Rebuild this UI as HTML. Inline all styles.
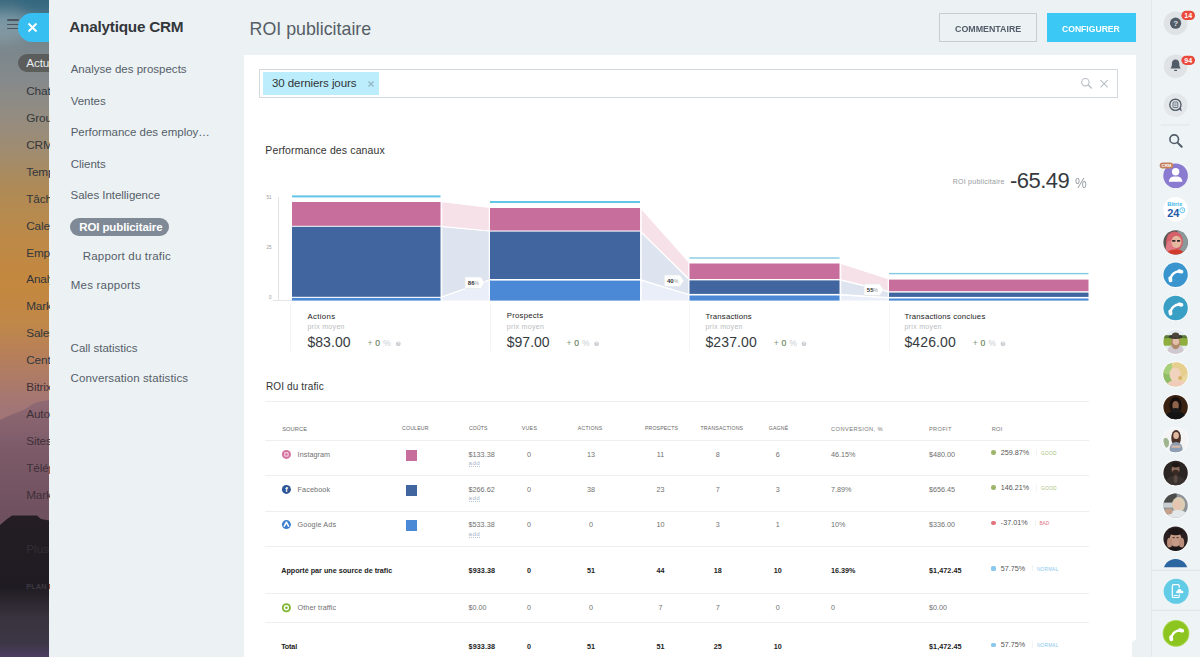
<!DOCTYPE html>
<html lang="fr">
<head>
<meta charset="utf-8">
<title>Analytique CRM - ROI publicitaire</title>
<style>
*{box-sizing:border-box;margin:0;padding:0}
html,body{width:1200px;height:657px;overflow:hidden}
body{font-family:"Liberation Sans",sans-serif;background:#ecf1f3;position:relative;color:#333}
.abs{position:absolute}
.t{position:absolute;white-space:nowrap}
#bg{position:absolute;left:0;top:0;width:52px;height:657px;overflow:hidden;background:#888}
#bgpill{position:absolute;left:18px;top:54px;width:60px;height:18px;border-radius:9px;background:rgba(84,84,82,.82)}
#burger{position:absolute;left:6.5px;top:19.3px;width:12px;height:11px}
#burger i{position:absolute;left:0;width:12px;height:1.6px;background:#4a5560;border-radius:1px}
#close{position:absolute;left:18px;top:13px;width:60px;height:28.5px;border-radius:14.25px;background:#38bff2}
#panel{position:absolute;left:49.3px;top:0;width:1103px;height:657px;background:#ecf1f3}
#mpill{position:absolute;left:70.4px;top:217.8px;width:98.3px;height:18.5px;border-radius:9.25px;background:#808a97}
#card{position:absolute;left:244.3px;top:55.4px;width:891.8px;height:602px;background:#fff}
.btn{position:absolute;top:13px;height:29px}
#filter{position:absolute;left:258.5px;top:68.5px;width:859.5px;height:29px;border:1px solid #d3d8dc;background:#fff}
#tag{position:absolute;left:263px;top:71.5px;width:115.5px;height:23px;background:#bcedfc}
.hl{position:absolute;left:264.5px;width:824px;height:1px;background:#eceff1}
.sq{position:absolute;left:406px;width:11.3px;height:11px}
.dot{position:absolute;left:991.2px;width:4.6px;height:4.6px;border-radius:50%}
#rbar{position:absolute;left:1151.4px;top:0;width:49px;height:657px;background:#eef3f5;border-left:1px solid #e2e8eb}
</style>
</head>
<body>
<div id="bg"><svg class="abs" style="left:0;top:0" width="52" height="657" viewBox="0 0 52 657"><defs><filter id="bl" x="-50%" y="-50%" width="200%" height="200%"><feGaussianBlur stdDeviation="6"/></filter><linearGradient id="sky" x1="0" y1="0" x2="0" y2="1" gradientUnits="objectBoundingBox"><stop offset="0" stop-color="#3d6b80"/><stop offset=".03" stop-color="#5a7f90"/><stop offset=".068" stop-color="#78868c"/><stop offset=".12" stop-color="#858a8c"/><stop offset=".18" stop-color="#948c80"/><stop offset=".23" stop-color="#a08c70"/><stop offset=".28" stop-color="#ad8a58"/><stop offset=".35" stop-color="#bb8a4a"/><stop offset=".43" stop-color="#c4883e"/><stop offset=".49" stop-color="#c08848"/><stop offset=".535" stop-color="#b88058"/><stop offset=".58" stop-color="#ac7a68"/><stop offset=".62" stop-color="#a27676"/><stop offset="1" stop-color="#a27676"/></linearGradient><linearGradient id="mnt" x1="0" y1="0" x2="0" y2="1"><stop offset="0" stop-color="#906a74"/><stop offset=".4" stop-color="#7c5a68"/><stop offset="1" stop-color="#6c4e5c"/></linearGradient><linearGradient id="rock" x1="0" y1="0" x2="0" y2="1"><stop offset="0" stop-color="#241e24"/><stop offset=".5" stop-color="#1f1b22"/><stop offset=".72" stop-color="#38333d"/><stop offset=".9" stop-color="#3d3646"/><stop offset="1" stop-color="#4d3d63"/></linearGradient></defs><rect width="52" height="657" fill="url(#sky)"/><g filter="url(#bl)"><ellipse cx="2" cy="27" rx="30" ry="15" fill="#9fb2bb" opacity=".45"/><ellipse cx="40" cy="3" rx="24" ry="9" fill="#2c6480" opacity=".55"/></g><path d="M0 420C10 414 22 412 30 406S44 402 52 399V530H0z" fill="url(#mnt)"/><path d="M0 525L7 519L12 515.5H37L41 519L52 521V657H0z" fill="url(#rock)"/></svg><div id="burger"><i style="top:0"></i><i style="top:4.3px"></i><i style="top:8.6px"></i></div><div id="bgpill"></div></div>
<div id="close"></div>
<svg class="abs" style="left:27px;top:22px" width="11" height="11" viewBox="0 0 11 11"><path d="M1.5 1.5l8 8M9.5 1.5l-8 8" stroke="#fff" stroke-width="1.9" fill="none"/></svg>
<div id="panel"></div><div id="mpill"></div>
<div class="btn" style="left:938.8px;width:98px;border:1px solid #c6cdd3"></div>
<div class="btn" style="left:1046.5px;width:89.5px;background:#3bc8f5"></div>
<div id="card"></div><div class="abs" style="left:1131.5px;top:640px;width:5px;height:17px;background:#ecf1f3;border-top-left-radius:4px"></div><div id="filter"></div><div id="tag"></div>
<svg class="abs" style="left:366px;top:79px" width="10" height="10" viewBox="0 0 10 10"><path d="M2.5 2.5l5 5M7.5 2.5l-5 5" stroke="#93b6c4" stroke-width="1.3" fill="none"/></svg>
<svg class="abs" style="left:1079px;top:76px" width="32" height="14" viewBox="0 0 32 14"><circle cx="6.4" cy="6.2" r="3.7" stroke="#b9bec4" stroke-width="1.1" fill="none"/><path d="M9.2 9l3.2 3" stroke="#b9bec4" stroke-width="1.4" stroke-linecap="round"/><path d="M21.5 4.2l7.2 7.2M28.7 4.2l-7.2 7.2" stroke="#b9bec4" stroke-width="1.1"/></svg>
<svg class="abs" style="left:0;top:0" width="1200" height="657" viewBox="0 0 1200 657" font-family="Liberation Sans, sans-serif">
<path d="M278.5 197V300.6" stroke="#dfe3e6" stroke-width="1"/>
<path d="M273 300.5H292" stroke="#e3e6e9" stroke-width="1"/>
<text x="271.5" y="199" font-size="4.6" fill="#999" text-anchor="end">51</text>
<text x="271.5" y="248.7" font-size="4.6" fill="#999" text-anchor="end">25</text>
<text x="271.5" y="299.3" font-size="4.6" fill="#999" text-anchor="end">0</text>
<polygon points="440.5,202 490,208 490,231 440.5,226.3" fill="#f7e1e9"/>
<polygon points="440.5,226.8 490,231.6 490,279.8 440.5,297.3" fill="#dde4ef"/>
<polygon points="440.5,297.9 490,280.6 490,300.6 440.5,300.6" fill="#e9eef8"/>
<path d="M440.5 226.3L490 231M440.5 297.3L490 279.8" stroke="#fff" stroke-width="1.2" fill="none"/>
<polygon points="640,208 689.5,263.5 689.5,279.5 640,231" fill="#f7e1e9"/>
<polygon points="640,231.6 689.5,280.4 689.5,294.7 640,279.5" fill="#dde4ef"/>
<polygon points="640,280.6 689.5,295.5 689.5,300.6 640,300.6" fill="#e9eef8"/>
<path d="M640 231L689.5 279.5M640 279.5L689.5 294.7" stroke="#fff" stroke-width="1.2" fill="none"/>
<polygon points="839.5,263.5 889,279.6 889,291.7 839.5,279.5" fill="#f7e1e9"/>
<polygon points="839.5,280.4 889,292.6 889,297.7 839.5,294.4" fill="#dde4ef"/>
<polygon points="839.5,295.5 889,298.5 889,300.6 839.5,300.6" fill="#e9eef8"/>
<path d="M839.5 279.5L889 291.7M839.5 294.4L889 297.7" stroke="#fff" stroke-width="1.2" fill="none"/>
<path d="M441.5 201V300.6M489.5 207V300.6" stroke="#fff" stroke-width="1.6" fill="none" opacity=".85"/>
<path d="M641 207V300.6M689 262.5V300.6" stroke="#fff" stroke-width="1.6" fill="none" opacity=".85"/>
<path d="M840.5 262.5V300.6M888.5 278.6V300.6" stroke="#fff" stroke-width="1.6" fill="none" opacity=".85"/>
<rect x="292" y="195.4" width="148.5" height="2" fill="#62c4e6"/>
<rect x="292" y="202" width="148.5" height="23.8" fill="#c76e9c"/>
<rect x="292" y="226.8" width="148.5" height="70" fill="#41659f"/>
<rect x="292" y="297.9" width="148.5" height="2.7" fill="#4b88d6"/>
<rect x="490" y="201" width="150" height="2" fill="#62c4e6"/>
<rect x="490" y="208" width="150" height="22.5" fill="#c76e9c"/>
<rect x="490" y="231.6" width="150" height="47.4" fill="#41659f"/>
<rect x="490" y="280.6" width="150" height="20" fill="#4b88d6"/>
<rect x="689.5" y="257.3" width="150" height="1.4" fill="#84cbe2"/>
<rect x="689.5" y="263.5" width="150" height="15.5" fill="#c76e9c"/>
<rect x="689.5" y="280.4" width="150" height="13.5" fill="#41659f"/>
<rect x="689.5" y="295.5" width="150" height="5.1" fill="#4b88d6"/>
<rect x="889" y="272.9" width="199.5" height="1.4" fill="#84cbe2"/>
<rect x="889" y="279.6" width="199.5" height="11.6" fill="#c76e9c"/>
<rect x="889" y="292.6" width="199.5" height="4.3" fill="#41659f"/>
<rect x="889" y="298.5" width="199.5" height="2.1" fill="#4b88d6"/>
<path d="M465 276.9h15.8l3.8 5.8l-3.8 5.8h-15.8z" fill="#fff" stroke="#e4e7ea" stroke-width=".8"/>
<text x="467.8" y="284.9" font-size="6" font-weight="bold" fill="#333">86<tspan font-weight="normal" fill="#999" font-size="5">%</tspan></text>
<path d="M664.2 275h15.8l3.8 5.8l-3.8 5.8h-15.8z" fill="#fff" stroke="#e4e7ea" stroke-width=".8"/>
<text x="667" y="283" font-size="6" font-weight="bold" fill="#333">40<tspan font-weight="normal" fill="#999" font-size="5">%</tspan></text>
<path d="M864 283.9h15.8l3.8 5.8l-3.8 5.8h-15.8z" fill="#fff" stroke="#e4e7ea" stroke-width=".8"/>
<text x="866.8" y="291.9" font-size="6" font-weight="bold" fill="#333">55<tspan font-weight="normal" fill="#999" font-size="5">%</tspan></text>
<path d="M290.5 304V351" stroke="#f2f4f5" stroke-width="1"/>
<path d="M490.5 304V351" stroke="#f2f4f5" stroke-width="1"/>
<path d="M689.5 304V351" stroke="#f2f4f5" stroke-width="1"/>
<path d="M889.5 304V351" stroke="#f2f4f5" stroke-width="1"/>
<circle cx="398.3" cy="343.8" r="2.4" fill="#c8ccd0"/><text x="398.3" y="345.2" font-size="3.6" font-weight="bold" fill="#fff" text-anchor="middle">?</text>
<circle cx="596.6" cy="343.8" r="2.4" fill="#c8ccd0"/><text x="596.6" y="345.2" font-size="3.6" font-weight="bold" fill="#fff" text-anchor="middle">?</text>
<circle cx="804" cy="343.8" r="2.4" fill="#c8ccd0"/><text x="804" y="345.2" font-size="3.6" font-weight="bold" fill="#fff" text-anchor="middle">?</text>
<circle cx="1003" cy="343.8" r="2.4" fill="#c8ccd0"/><text x="1003" y="345.2" font-size="3.6" font-weight="bold" fill="#fff" text-anchor="middle">?</text>
</svg>
<div class="hl" style="top:401px"></div>
<div class="hl" style="top:440px"></div>
<div class="hl" style="top:475px"></div>
<div class="hl" style="top:511px"></div>
<div class="hl" style="top:546px"></div>
<div class="hl" style="top:593px"></div>
<div class="hl" style="top:622px"></div>
<div class="sq" style="top:449.8px;background:#c76e9c"></div>
<div class="sq" style="top:484.8px;background:#41659f"></div>
<div class="sq" style="top:520.1px;background:#4b88d6"></div>
<svg class="abs" style="left:0;top:0" width="1200" height="657" viewBox="0 0 1200 657" font-family="Liberation Sans, sans-serif">
<circle cx="286.4" cy="454.4" r="4.5" fill="#d2709d"/><rect x="284.1" y="452.1" width="4.6" height="4.6" rx="1.3" fill="#f3c9dc"/><circle cx="286.4" cy="454.4" r="1.2" fill="#d2709d"/>
<circle cx="286.4" cy="489.4" r="4.5" fill="#2f5597"/><text x="286.6" y="492.3" font-size="7.5" font-weight="bold" fill="#fff" text-anchor="middle">f</text>
<circle cx="286.4" cy="524.6" r="4.5" fill="#3d7fcc"/><path d="M284 526.7l2.4-4.6l2.4 4.6" stroke="#fff" stroke-width="1.5" fill="none" stroke-linejoin="round"/>
<circle cx="286.4" cy="607.7" r="4.5" fill="#7cb52f"/><circle cx="286.4" cy="607.7" r="2" fill="none" stroke="#fff" stroke-width="1.4"/>
</svg>
<div class="dot" style="top:450.3px;background:#9cb56a;"></div>
<div class="abs" style="left:1036px;top:449.6px;width:1px;height:6px;background:#f0f2f4"></div>
<div class="dot" style="top:485.3px;background:#9cb56a;"></div>
<div class="abs" style="left:1036px;top:484.6px;width:1px;height:6px;background:#f0f2f4"></div>
<div class="dot" style="top:520.6px;background:#e2737a;"></div>
<div class="abs" style="left:1034.7px;top:519.9px;width:1px;height:6px;background:#f0f2f4"></div>
<div class="dot" style="top:566px;background:#8cc9ee;border-radius:1.5px;"></div>
<div class="abs" style="left:1031.6px;top:565.3px;width:1px;height:6px;background:#f0f2f4"></div>
<div class="dot" style="top:642.5px;background:#8cc9ee;border-radius:1.5px;"></div>
<div class="abs" style="left:1031.6px;top:641.8px;width:1px;height:6px;background:#f0f2f4"></div>
<div id="rbar"></div>
<svg class="abs" style="left:1152px;top:0" width="48" height="657" viewBox="1152 0 48 657" font-family="Liberation Sans, sans-serif">
<defs><clipPath id="cut"><rect x="1152" y="540" width="48" height="27.2"/></clipPath></defs>
<circle cx="1175.6" cy="23.2" r="11.8" fill="#dfe3e6"/><circle cx="1175.6" cy="23.2" r="5.6" fill="#525c69"/>
<text x="1175.6" y="26.1" font-size="8" font-weight="bold" fill="#dfe3e6" text-anchor="middle">?</text>
<circle cx="1175.6" cy="66.2" r="11.8" fill="#dfe3e6"/>
<path d="M1175.6 59.6c-2.5 0-3.7 1.8-3.7 4.2c0 2.3-.5 3.6-1.5 4.7h10.4c-1-1.1-1.5-2.4-1.5-4.7c0-2.4-1.2-4.2-3.7-4.2z" fill="#525c69"/><rect x="1174.1" y="69.7" width="3" height="1.4" rx=".7" fill="#525c69"/>
<circle cx="1175.6" cy="105.2" r="11.8" fill="#e3e7ea"/><circle cx="1175.4" cy="104.8" r="5.6" fill="none" stroke="#525c69" stroke-width="1.4"/><path d="M1178.6 109l3.2 2.4l-1-3.8z" fill="#525c69"/>
<rect x="1173" y="102" width="4.8" height="5.6" rx=".8" fill="none" stroke="#525c69" stroke-width=".9"/><path d="M1174.2 104h2.4M1174.2 105.7h2.4" stroke="#525c69" stroke-width=".7"/>
<path d="M1161 125H1190" stroke="#e1e5e8" stroke-width="1"/>
<circle cx="1174.2" cy="139.2" r="4.3" fill="none" stroke="#525c69" stroke-width="1.6"/><path d="M1177.5 142.6l4.2 4.2" stroke="#525c69" stroke-width="2" stroke-linecap="round"/>
<circle cx="1175.6" cy="175.7" r="12.3" fill="#8b7bd0"/><circle cx="1175.6" cy="171.8" r="3.7" fill="#fff"/><path d="M1168.8 181.8c.2-3.3 2-4.8 4.8-5.3h4c2.8.5 4.6 2 4.8 5.3z" fill="#fff"/>
<rect x="1159.7" y="162.5" width="13.6" height="6" rx="3" fill="#c4815c"/><text x="1166.5" y="167.2" font-size="4.3" font-weight="bold" fill="#fff" text-anchor="middle">CRM</text>
<circle cx="1175.6" cy="209.4" r="12.3" fill="#fff"/><text x="1174.7" y="206.2" font-size="5.9" font-weight="bold" fill="#3bb6e8" text-anchor="middle">Bitrix</text><text x="1173.3" y="216.8" font-size="11" font-weight="bold" fill="#1f5aa8" text-anchor="middle">24</text><circle cx="1182.3" cy="210.2" r="2.5" fill="none" stroke="#3bb6e8" stroke-width=".8"/><path d="M1182.3 208.8v1.5h1.1" stroke="#3bb6e8" stroke-width=".6" fill="none"/>
<clipPath id="c242"><circle cx="1175.6" cy="242.4" r="12.2"/></clipPath><g clip-path="url(#c242)"><rect x="1162.6" y="229.4" width="26" height="26" fill="#5a5653"/><rect x="1177.6" y="229.4" width="12" height="26" fill="#8a9a9a"/><ellipse cx="1174.6" cy="241.4" rx="8.5" ry="10" fill="#d4606a"/><ellipse cx="1170.6" cy="248.4" rx="5" ry="8" fill="#e07a84"/><ellipse cx="1176.4" cy="241.9" rx="5" ry="6.2" fill="#e6b8a0"/><ellipse cx="1175.6" cy="254.4" rx="9" ry="5" fill="#d23c2c"/><path d="M1172.2 240.8h3.2M1177 240.8h3.2" stroke="#3a2a2a" stroke-width="1.7"/></g>
<circle cx="1175.6" cy="274.8" r="13.3" fill="#f7f9fa"/><circle cx="1175.6" cy="274.8" r="12.2" fill="#3a95cf"/>
<path d="M1181.2 271.5C1175.1 270.4 1170.6 274.8 1170.4 280.3" fill="none" stroke="#fff" stroke-width="2.3" stroke-linecap="round"/><path d="M1179.2 271.1L1181.5 271.7M1170.2 278L1170.6 280.4" fill="none" stroke="#fff" stroke-width="3.7" stroke-linecap="round"/>
<circle cx="1175.6" cy="308" r="13.3" fill="#f7f9fa"/><circle cx="1175.6" cy="308" r="12.2" fill="#3a9fc4"/>
<path d="M1181.2 304.7C1175.1 303.6 1170.6 308 1170.4 313.5" fill="none" stroke="#fff" stroke-width="2.3" stroke-linecap="round"/><path d="M1179.2 304.3L1181.5 304.9M1170.2 311.2L1170.6 313.6" fill="none" stroke="#fff" stroke-width="3.7" stroke-linecap="round"/>
<clipPath id="c341"><circle cx="1175.6" cy="341.7" r="12.2"/></clipPath><circle cx="1175.6" cy="341.7" r="13.3" fill="#f7f9fa"/><g clip-path="url(#c341)"><rect x="1162.6" y="328.7" width="26" height="26" fill="#e6edf1"/><rect x="1162.6" y="336.7" width="26" height="9" fill="#8fae3e"/><rect x="1162.6" y="335.2" width="26" height="3" fill="#5b7a3a"/><ellipse cx="1175.6" cy="351.7" rx="8" ry="8" fill="#cfc9cf"/><ellipse cx="1175.6" cy="342.7" rx="4.6" ry="6.5" fill="#b08a6a"/><ellipse cx="1175.9" cy="341.2" rx="3.2" ry="3.8" fill="#e2bfa8"/><ellipse cx="1175.6" cy="336.7" rx="7" ry="2.2" fill="#3b3a32"/><ellipse cx="1175.6" cy="335.2" rx="3.6" ry="2.6" fill="#4a463a"/></g>
<clipPath id="c374"><circle cx="1175.6" cy="374.4" r="12.2"/></clipPath><circle cx="1175.6" cy="374.4" r="13.3" fill="#f7f9fa"/><g clip-path="url(#c374)"><rect x="1162.6" y="361.4" width="26" height="26" fill="#e9d7a0"/><rect x="1162.6" y="361.4" width="9" height="26" fill="#8fbc66"/><ellipse cx="1167.6" cy="368.4" rx="5" ry="6" fill="#a8cf7a"/><ellipse cx="1179.6" cy="369.4" rx="8" ry="8" fill="#e6cf8e"/><ellipse cx="1175.1" cy="374.4" rx="5.6" ry="7" fill="#f1d3bd"/><ellipse cx="1176.6" cy="385.4" rx="10" ry="5" fill="#f0cbb9"/><ellipse cx="1180.1" cy="377.9" rx="2" ry="2" fill="#d9b06a"/></g>
<clipPath id="c407"><circle cx="1175.6" cy="407.1" r="12.2"/></clipPath><circle cx="1175.6" cy="407.1" r="13.3" fill="#f7f9fa"/><g clip-path="url(#c407)"><rect x="1162.6" y="394.1" width="26" height="26" fill="#3a2212"/><ellipse cx="1175.6" cy="405.1" rx="6.2" ry="8" fill="#17100e"/><ellipse cx="1175.6" cy="405.6" rx="3.2" ry="4.6" fill="#8d634b"/><ellipse cx="1175.6" cy="418.1" rx="10.5" ry="7" fill="#141414"/><ellipse cx="1175.6" cy="410.6" rx="4" ry="2.5" fill="#1a1a1c"/></g>
<clipPath id="c440"><circle cx="1175.6" cy="440" r="12.2"/></clipPath><circle cx="1175.6" cy="440" r="13.3" fill="#f7f9fa"/><g clip-path="url(#c440)"><rect x="1162.6" y="427" width="26" height="26" fill="#f3f4f3"/><ellipse cx="1165.6" cy="443" rx="3.5" ry="5" fill="#9fb58f"/><ellipse cx="1176.1" cy="438" rx="4.8" ry="8" fill="#4a3228"/><ellipse cx="1176.1" cy="435.5" rx="2.8" ry="3.5" fill="#dfb8a2"/><ellipse cx="1176.1" cy="449" rx="6.5" ry="7" fill="#8d9db3"/><rect x="1171.6" y="445.5" width="9" height="2.2" fill="#d9b8a6"/></g>
<clipPath id="c473"><circle cx="1175.6" cy="473" r="12.2"/></clipPath><circle cx="1175.6" cy="473" r="13.3" fill="#f7f9fa"/><g clip-path="url(#c473)"><rect x="1162.6" y="460" width="26" height="26" fill="#2b2523"/><ellipse cx="1175.6" cy="469.5" rx="4" ry="5" fill="#8a6a58"/><ellipse cx="1175.6" cy="472.7" rx="3.4" ry="3" fill="#3a2a24"/><ellipse cx="1175.6" cy="465" rx="4" ry="2.4" fill="#1d1716"/><ellipse cx="1175.6" cy="483" rx="10" ry="7.5" fill="#39322f"/><ellipse cx="1175.6" cy="479" rx="2" ry="4" fill="#5a4a44"/></g>
<clipPath id="c505"><circle cx="1175.6" cy="505.6" r="12.2"/></clipPath><circle cx="1175.6" cy="505.6" r="13.3" fill="#f7f9fa"/><g clip-path="url(#c505)"><rect x="1162.6" y="492.6" width="26" height="26" fill="#8e9498"/><rect x="1162.6" y="492.6" width="14" height="11" fill="#4b4c4a"/><rect x="1162.6" y="502.6" width="10" height="5" fill="#c9ced2"/><ellipse cx="1178.6" cy="504.6" rx="6.5" ry="7.5" fill="#dccdb4"/><ellipse cx="1177.1" cy="505.1" rx="3.6" ry="4.6" fill="#e6c4b0"/><ellipse cx="1177.6" cy="516.6" rx="11" ry="6.5" fill="#e3e7ea"/><ellipse cx="1168.6" cy="511.6" rx="4" ry="3" fill="#c2a08a"/></g>
<clipPath id="c538"><circle cx="1175.6" cy="538.7" r="12.2"/></clipPath><circle cx="1175.6" cy="538.7" r="13.3" fill="#f7f9fa"/><g clip-path="url(#c538)"><rect x="1162.6" y="525.7" width="26" height="26" fill="#2a2021"/><ellipse cx="1175.6" cy="539.2" rx="6" ry="7.5" fill="#c49a86"/><ellipse cx="1175.6" cy="531.7" rx="7" ry="3.5" fill="#1e1617"/><ellipse cx="1169.6" cy="542.7" rx="2.6" ry="5" fill="#b98d79"/><ellipse cx="1181.6" cy="542.7" rx="2.6" ry="5" fill="#b98d79"/><ellipse cx="1175.6" cy="550.7" rx="10" ry="4" fill="#1a1516"/><path d="M1172.6 537.7h2M1176.6 537.7h2" stroke="#3a2522" stroke-width="1"/></g>
<circle cx="1175.6" cy="571.3" r="12.3" fill="#2c66a0" clip-path="url(#cut)"/>
<path d="M1152 570.3H1200M1152 610.3H1200" stroke="#e1e6e9" stroke-width="1.2"/>
<circle cx="1176.2" cy="591.3" r="12.5" fill="#62cbe6"/>
<rect x="1172.3" y="584.7" width="7" height="12.8" rx="1.3" fill="none" stroke="#fff" stroke-width="1.2"/><path d="M1173.8 595.5h4" stroke="#fff" stroke-width="1"/>
<path d="M1177.2 593.8c-2.1 0-2.4-2.8-.4-3.1c.3-2.9 4.4-3.1 5.1-.6c2.6-.2 2.9 3.6.4 3.7z" fill="#fff" stroke="#62cbe6" stroke-width="1.1"/>
<circle cx="1176" cy="633.4" r="13.3" fill="#a3d546"/><circle cx="1176" cy="633.4" r="12.3" fill="#8cc51f"/>
<g transform="translate(0.8 1)"><path d="M1181.2 629.5C1175.1 628.4 1170.6 632.8 1170.4 638.3" fill="none" stroke="#fff" stroke-width="2.3" stroke-linecap="round"/><path d="M1179.2 629.1L1181.5 629.7M1170.2 636L1170.6 638.4" fill="none" stroke="#fff" stroke-width="3.7" stroke-linecap="round"/></g>
<rect x="1181.4" y="10.8" width="13.6" height="9.2" rx="4.6" fill="#e9483a"/><text x="1188.2" y="17.9" font-size="7" font-weight="bold" fill="#fff" text-anchor="middle">14</text>
<rect x="1181.4" y="55.7" width="13.6" height="9.2" rx="4.6" fill="#e9483a"/><text x="1188.2" y="62.8" font-size="7" font-weight="bold" fill="#fff" text-anchor="middle">94</text>
</svg>
<div class="t" style="left:26.2px;top:54.5px;font-size:11.8px;line-height:16px;color:#e9ecee;max-width:23.6px;overflow:hidden;letter-spacing:-.15px;">Actualités</div>
<div class="t" style="left:26.2px;top:82.93px;font-size:11.8px;line-height:16px;color:#33363b;max-width:23.6px;overflow:hidden;letter-spacing:-.15px;">Chat et appels</div>
<div class="t" style="left:26.2px;top:109.86px;font-size:11.8px;line-height:16px;color:#33363b;max-width:23.6px;overflow:hidden;letter-spacing:-.15px;">Groupes</div>
<div class="t" style="left:26.2px;top:136.79px;font-size:11.8px;line-height:16px;color:#33363b;max-width:23.6px;overflow:hidden;letter-spacing:-.15px;">CRM</div>
<div class="t" style="left:26.2px;top:163.72px;font-size:11.8px;line-height:16px;color:#33363b;max-width:23.6px;overflow:hidden;letter-spacing:-.15px;">Temps et rapports</div>
<div class="t" style="left:26.2px;top:190.65px;font-size:11.8px;line-height:16px;color:#33363b;max-width:23.6px;overflow:hidden;letter-spacing:-.15px;">Tâches et projets</div>
<div class="t" style="left:26.2px;top:217.58px;font-size:11.8px;line-height:16px;color:#33363b;max-width:23.6px;overflow:hidden;letter-spacing:-.15px;">Calendrier</div>
<div class="t" style="left:26.2px;top:244.51px;font-size:11.8px;line-height:16px;color:#33363b;max-width:23.6px;overflow:hidden;letter-spacing:-.15px;">Employés</div>
<div class="t" style="left:26.2px;top:271.44px;font-size:11.8px;line-height:16px;color:#33363b;max-width:23.6px;overflow:hidden;letter-spacing:-.15px;">Analytique CRM</div>
<div class="t" style="left:26.2px;top:298.37px;font-size:11.8px;line-height:16px;color:#33363b;max-width:23.6px;overflow:hidden;letter-spacing:-.15px;">Marketing</div>
<div class="t" style="left:26.2px;top:325.3px;font-size:11.8px;line-height:16px;color:#33363b;max-width:23.6px;overflow:hidden;letter-spacing:-.15px;">Sales Center</div>
<div class="t" style="left:26.2px;top:352.23px;font-size:11.8px;line-height:16px;color:#33363b;max-width:23.6px;overflow:hidden;letter-spacing:-.15px;">Centre de contact</div>
<div class="t" style="left:26.2px;top:379.16px;font-size:11.8px;line-height:16px;color:#3e3038;max-width:23.6px;overflow:hidden;letter-spacing:-.15px;">Bitrix24.Drive</div>
<div class="t" style="left:26.2px;top:406.09px;font-size:11.8px;line-height:16px;color:#3e3038;max-width:23.6px;overflow:hidden;letter-spacing:-.15px;">Automatisation</div>
<div class="t" style="left:26.2px;top:433.02px;font-size:11.8px;line-height:16px;color:#3e3038;max-width:23.6px;overflow:hidden;letter-spacing:-.15px;">Sites</div>
<div class="t" style="left:26.2px;top:459.95px;font-size:11.8px;line-height:16px;color:#3e3038;max-width:23.6px;overflow:hidden;letter-spacing:-.15px;">Téléphonie</div>
<div class="t" style="left:26.2px;top:486.88px;font-size:11.8px;line-height:16px;color:#3e3038;max-width:23.6px;overflow:hidden;letter-spacing:-.15px;">Market</div>
<div class="t" style="left:26.2px;top:541.1px;font-size:11.8px;line-height:16px;color:#322d34;max-width:23.6px;overflow:hidden;">Plus...</div>
<div class="t" style="left:26.2px;top:582.02px;font-size:7.5px;line-height:10px;color:#3d3841;font-weight:bold;max-width:23.6px;overflow:hidden;">PLAN DU SITE</div>
<div class="t" style="left:69.3px;top:17.04px;font-size:15.3px;line-height:20px;color:#33373b;font-weight:bold;letter-spacing:-0.23px;">Analytique CRM</div>
<div class="t" style="left:249.6px;top:17.12px;font-size:17.8px;line-height:24px;color:#555d66;">ROI publicitaire</div>
<div class="t" style="left:70.7px;top:62.2px;font-size:11.5px;line-height:15px;color:#555e6a;letter-spacing:0.01px;">Analyse des prospects</div>
<div class="t" style="left:70.7px;top:94px;font-size:11.5px;line-height:15px;color:#555e6a;letter-spacing:-0.03px;">Ventes</div>
<div class="t" style="left:70.7px;top:125px;font-size:11.5px;line-height:15px;color:#555e6a;letter-spacing:-0.01px;">Performance des employ…</div>
<div class="t" style="left:70.7px;top:156.5px;font-size:11.5px;line-height:15px;color:#555e6a;letter-spacing:-0.02px;">Clients</div>
<div class="t" style="left:70.6px;top:188.3px;font-size:11.5px;line-height:15px;color:#555e6a;letter-spacing:-0.04px;">Sales Intelligence</div>
<div class="t" style="left:82.8px;top:249.1px;font-size:11.5px;line-height:15px;color:#555e6a;letter-spacing:0.18px;">Rapport du trafic</div>
<div class="t" style="left:70.8px;top:278.3px;font-size:11.5px;line-height:15px;color:#555e6a;letter-spacing:0.21px;">Mes rapports</div>
<div class="t" style="left:70.6px;top:341.3px;font-size:11.5px;line-height:15px;color:#555e6a;letter-spacing:-0.01px;">Call statistics</div>
<div class="t" style="left:70.6px;top:370.5px;font-size:11.5px;line-height:15px;color:#555e6a;letter-spacing:0.11px;">Conversation statistics</div>
<div class="t" style="left:79.2px;top:220.2px;font-size:11.5px;line-height:15px;color:#fff;font-weight:bold;letter-spacing:-0.11px;">ROI publicitaire</div>
<div class="t" style="left:955.1px;top:21.93px;font-size:9.9px;line-height:13px;color:#535c69;font-weight:bold;transform:scaleX(0.896);transform-origin:0 0;">COMMENTAIRE</div>
<div class="t" style="left:1062.4px;top:21.93px;font-size:9.9px;line-height:13px;color:#fff;font-weight:bold;transform:scaleX(0.871);transform-origin:0 0;">CONFIGURER</div>
<div class="t" style="left:272px;top:75.5px;font-size:11.5px;line-height:15px;color:#2f3337;letter-spacing:-0.07px;">30 derniers jours</div>
<div class="t" style="left:265.3px;top:143.13px;font-size:10.5px;line-height:14px;color:#333;letter-spacing:0.13px;">Performance des canaux</div>
<div class="t" style="left:952.7px;top:176.69px;font-size:7px;line-height:10px;color:#969ba0;letter-spacing:0.26px;">ROI publicitaire</div>
<div class="t" style="left:1010px;top:165.93px;font-size:22px;line-height:29px;color:#363a3f;letter-spacing:-0.52px;">-65.49</div>
<div class="t" style="left:1075px;top:172.64px;font-size:15.3px;line-height:20px;color:#9a9fa5;transform:scaleX(0.86);transform-origin:0 0;">%</div>
<div class="t" style="left:307.4px;top:311.22px;font-size:7.8px;line-height:11px;color:#222;letter-spacing:0.35px;">Actions</div>
<div class="t" style="left:307.4px;top:321.99px;font-size:7px;line-height:10px;color:#b8bcc0;letter-spacing:0.32px;">prix moyen</div>
<div class="t" style="left:307.4px;top:332.67px;font-size:14px;line-height:19px;color:#363b40;letter-spacing:0.06px;">$83.00</div>
<div class="t" style="left:367.4px;top:337.46px;font-size:8.6px;line-height:12px;color:#82987a;letter-spacing:0.25px;">+ <span style="text-shadow:0 0 .3px #82987a">0</span> <span style="color:#c9cdd1">%</span></div>
<div class="t" style="left:506.8px;top:310.32px;font-size:7.8px;line-height:11px;color:#222;letter-spacing:0.2px;">Prospects</div>
<div class="t" style="left:506.8px;top:321.99px;font-size:7px;line-height:10px;color:#b8bcc0;letter-spacing:0.32px;">prix moyen</div>
<div class="t" style="left:506.8px;top:332.67px;font-size:14px;line-height:19px;color:#363b40;letter-spacing:0px;">$97.00</div>
<div class="t" style="left:566.4px;top:337.46px;font-size:8.6px;line-height:12px;color:#82987a;letter-spacing:0.25px;">+ <span style="text-shadow:0 0 .3px #82987a">0</span> <span style="color:#c9cdd1">%</span></div>
<div class="t" style="left:705.4px;top:311.22px;font-size:7.8px;line-height:11px;color:#222;letter-spacing:0.18px;">Transactions</div>
<div class="t" style="left:705.4px;top:321.99px;font-size:7px;line-height:10px;color:#b8bcc0;letter-spacing:0.32px;">prix moyen</div>
<div class="t" style="left:705.4px;top:332.67px;font-size:14px;line-height:19px;color:#363b40;letter-spacing:0.13px;">$237.00</div>
<div class="t" style="left:773.7px;top:337.46px;font-size:8.6px;line-height:12px;color:#82987a;letter-spacing:0.25px;">+ <span style="text-shadow:0 0 .3px #82987a">0</span> <span style="color:#c9cdd1">%</span></div>
<div class="t" style="left:904.4px;top:311.22px;font-size:7.8px;line-height:11px;color:#222;letter-spacing:0.18px;">Transactions conclues</div>
<div class="t" style="left:904.4px;top:321.99px;font-size:7px;line-height:10px;color:#b8bcc0;letter-spacing:0.32px;">prix moyen</div>
<div class="t" style="left:904.4px;top:332.67px;font-size:14px;line-height:19px;color:#363b40;letter-spacing:0.13px;">$426.00</div>
<div class="t" style="left:972.7px;top:337.46px;font-size:8.6px;line-height:12px;color:#82987a;letter-spacing:0.25px;">+ <span style="text-shadow:0 0 .3px #82987a">0</span> <span style="color:#c9cdd1">%</span></div>
<div class="t" style="left:266px;top:379.8px;font-size:10px;line-height:13px;color:#333;letter-spacing:0.13px;">ROI du trafic</div>
<div class="t" style="left:282.2px;top:424.72px;font-size:5.7px;line-height:8px;color:#6a6a6a;letter-spacing:0.08px;">SOURCE</div>
<div class="t" style="left:402px;top:425.38px;font-size:5.2px;line-height:7px;color:#666;letter-spacing:0.18px;">COULEUR</div>
<div class="t" style="left:469px;top:425.38px;font-size:5.2px;line-height:7px;color:#666;letter-spacing:0.07px;">COÛTS</div>
<div class="t" style="left:521.8px;top:425.38px;font-size:5.2px;line-height:7px;color:#666;letter-spacing:0.31px;">VUES</div>
<div class="t" style="left:577.8px;top:425.38px;font-size:5.2px;line-height:7px;color:#666;letter-spacing:0.21px;">ACTIONS</div>
<div class="t" style="left:645px;top:425.38px;font-size:5.2px;line-height:7px;color:#666;letter-spacing:0.11px;">PROSPECTS</div>
<div class="t" style="left:700.5px;top:425.38px;font-size:5.2px;line-height:7px;color:#666;letter-spacing:0.17px;">TRANSACTIONS</div>
<div class="t" style="left:768.8px;top:425.38px;font-size:5.2px;line-height:7px;color:#666;letter-spacing:0.15px;">GAGNÉ</div>
<div class="t" style="left:831px;top:424.72px;font-size:5.7px;line-height:8px;color:#777;letter-spacing:0.43px;">CONVERSION, %</div>
<div class="t" style="left:929px;top:424.72px;font-size:5.7px;line-height:8px;color:#777;letter-spacing:0.32px;">PROFIT</div>
<div class="t" style="left:991.7px;top:424.72px;font-size:5.7px;line-height:8px;color:#777;letter-spacing:0.29px;">ROI</div>
<div class="t" style="left:297.6px;top:449.52px;font-size:7.2px;line-height:10px;color:#707070;letter-spacing:0.07px;">Instagram</div>
<div class="t" style="left:468.6px;top:449.52px;font-size:7.2px;line-height:10px;color:#707070;letter-spacing:0.01px;">$133.38</div>
<div class="t" style="left:468.6px;top:459.35px;font-size:6.2px;line-height:9px;color:#a9b6c9;letter-spacing:0.42px;border-bottom:1px dotted #b9c3d2;line-height:7px;">add</div>
<div class="t" style="left:529px;top:449.52px;font-size:7.2px;line-height:10px;color:#707070;transform:translateX(-50%);">0</div>
<div class="t" style="left:591px;top:449.52px;font-size:7.2px;line-height:10px;color:#707070;transform:translateX(-50%);">13</div>
<div class="t" style="left:660.6px;top:449.52px;font-size:7.2px;line-height:10px;color:#707070;transform:translateX(-50%);">11</div>
<div class="t" style="left:717.8px;top:449.52px;font-size:7.2px;line-height:10px;color:#707070;transform:translateX(-50%);">8</div>
<div class="t" style="left:777.7px;top:449.52px;font-size:7.2px;line-height:10px;color:#707070;transform:translateX(-50%);">6</div>
<div class="t" style="left:831px;top:449.52px;font-size:7.2px;line-height:10px;color:#707070;letter-spacing:0px;">46.15%</div>
<div class="t" style="left:929px;top:449.52px;font-size:7.2px;line-height:10px;color:#707070;letter-spacing:0.01px;">$480.00</div>
<div class="t" style="left:1000.8px;top:447.92px;font-size:7.2px;line-height:10px;color:#555;letter-spacing:0.01px;">259.87%</div>
<div class="t" style="left:1041px;top:449.91px;font-size:4.8px;line-height:7px;color:#a9bf7c;letter-spacing:0.28px;">GOOD</div>
<div class="t" style="left:297.6px;top:484.52px;font-size:7.2px;line-height:10px;color:#707070;letter-spacing:0.13px;">Facebook</div>
<div class="t" style="left:468.6px;top:484.52px;font-size:7.2px;line-height:10px;color:#707070;letter-spacing:0.01px;">$266.62</div>
<div class="t" style="left:468.6px;top:494.35px;font-size:6.2px;line-height:9px;color:#a9b6c9;letter-spacing:0.42px;border-bottom:1px dotted #b9c3d2;line-height:7px;">add</div>
<div class="t" style="left:529px;top:484.52px;font-size:7.2px;line-height:10px;color:#707070;transform:translateX(-50%);">0</div>
<div class="t" style="left:591px;top:484.52px;font-size:7.2px;line-height:10px;color:#707070;transform:translateX(-50%);">38</div>
<div class="t" style="left:660.6px;top:484.52px;font-size:7.2px;line-height:10px;color:#707070;transform:translateX(-50%);">23</div>
<div class="t" style="left:717.8px;top:484.52px;font-size:7.2px;line-height:10px;color:#707070;transform:translateX(-50%);">7</div>
<div class="t" style="left:777.7px;top:484.52px;font-size:7.2px;line-height:10px;color:#707070;transform:translateX(-50%);">3</div>
<div class="t" style="left:831px;top:484.52px;font-size:7.2px;line-height:10px;color:#707070;letter-spacing:0px;">7.89%</div>
<div class="t" style="left:929px;top:484.52px;font-size:7.2px;line-height:10px;color:#707070;letter-spacing:0.01px;">$656.45</div>
<div class="t" style="left:1000.8px;top:482.92px;font-size:7.2px;line-height:10px;color:#555;letter-spacing:0.01px;">146.21%</div>
<div class="t" style="left:1041px;top:484.91px;font-size:4.8px;line-height:7px;color:#a9bf7c;letter-spacing:0.28px;">GOOD</div>
<div class="t" style="left:297.6px;top:519.82px;font-size:7.2px;line-height:10px;color:#707070;letter-spacing:0.14px;">Google Ads</div>
<div class="t" style="left:468.6px;top:519.82px;font-size:7.2px;line-height:10px;color:#707070;letter-spacing:0.01px;">$533.38</div>
<div class="t" style="left:468.6px;top:529.65px;font-size:6.2px;line-height:9px;color:#a9b6c9;letter-spacing:0.42px;border-bottom:1px dotted #b9c3d2;line-height:7px;">add</div>
<div class="t" style="left:529px;top:519.82px;font-size:7.2px;line-height:10px;color:#707070;transform:translateX(-50%);">0</div>
<div class="t" style="left:591px;top:519.82px;font-size:7.2px;line-height:10px;color:#707070;transform:translateX(-50%);">0</div>
<div class="t" style="left:660.6px;top:519.82px;font-size:7.2px;line-height:10px;color:#707070;transform:translateX(-50%);">10</div>
<div class="t" style="left:717.8px;top:519.82px;font-size:7.2px;line-height:10px;color:#707070;transform:translateX(-50%);">3</div>
<div class="t" style="left:777.7px;top:519.82px;font-size:7.2px;line-height:10px;color:#707070;transform:translateX(-50%);">1</div>
<div class="t" style="left:831px;top:519.82px;font-size:7.2px;line-height:10px;color:#707070;letter-spacing:0.01px;">10%</div>
<div class="t" style="left:929px;top:519.82px;font-size:7.2px;line-height:10px;color:#707070;letter-spacing:0.01px;">$336.00</div>
<div class="t" style="left:1000.8px;top:518.22px;font-size:7.2px;line-height:10px;color:#555;letter-spacing:0px;">-37.01%</div>
<div class="t" style="left:1039.5px;top:520.21px;font-size:4.8px;line-height:7px;color:#e2737a;letter-spacing:-0.12px;">BAD</div>
<div class="t" style="left:281.2px;top:565.72px;font-size:7.2px;line-height:10px;color:#222;font-weight:bold;">Apporté par une source de trafic</div>
<div class="t" style="left:468.6px;top:565.72px;font-size:7.2px;line-height:10px;color:#222;font-weight:bold;letter-spacing:0.09px;">$933.38</div>
<div class="t" style="left:529px;top:565.72px;font-size:7.2px;line-height:10px;color:#222;font-weight:bold;transform:translateX(-50%);">0</div>
<div class="t" style="left:591px;top:565.72px;font-size:7.2px;line-height:10px;color:#222;font-weight:bold;transform:translateX(-50%);">51</div>
<div class="t" style="left:660.6px;top:565.72px;font-size:7.2px;line-height:10px;color:#222;font-weight:bold;transform:translateX(-50%);">44</div>
<div class="t" style="left:717.8px;top:565.72px;font-size:7.2px;line-height:10px;color:#222;font-weight:bold;transform:translateX(-50%);">18</div>
<div class="t" style="left:777.7px;top:565.72px;font-size:7.2px;line-height:10px;color:#222;font-weight:bold;transform:translateX(-50%);">10</div>
<div class="t" style="left:831px;top:565.72px;font-size:7.2px;line-height:10px;color:#222;font-weight:bold;letter-spacing:0px;">16.39%</div>
<div class="t" style="left:929px;top:565.72px;font-size:7.2px;line-height:10px;color:#222;font-weight:bold;letter-spacing:0.07px;">$1,472.45</div>
<div class="t" style="left:1000.8px;top:563.52px;font-size:7.2px;line-height:10px;color:#555;letter-spacing:0px;">57.75%</div>
<div class="t" style="left:1037px;top:565.51px;font-size:4.8px;line-height:7px;color:#8cc9ee;letter-spacing:0.16px;">NORMAL</div>
<div class="t" style="left:297.6px;top:602.92px;font-size:7.2px;line-height:10px;color:#707070;letter-spacing:0.09px;">Other traffic</div>
<div class="t" style="left:468.6px;top:602.92px;font-size:7.2px;line-height:10px;color:#707070;">$0.00</div>
<div class="t" style="left:529px;top:602.92px;font-size:7.2px;line-height:10px;color:#707070;transform:translateX(-50%);">0</div>
<div class="t" style="left:591px;top:602.92px;font-size:7.2px;line-height:10px;color:#707070;transform:translateX(-50%);">0</div>
<div class="t" style="left:660.6px;top:602.92px;font-size:7.2px;line-height:10px;color:#707070;transform:translateX(-50%);">7</div>
<div class="t" style="left:717.8px;top:602.92px;font-size:7.2px;line-height:10px;color:#707070;transform:translateX(-50%);">7</div>
<div class="t" style="left:777.7px;top:602.92px;font-size:7.2px;line-height:10px;color:#707070;transform:translateX(-50%);">0</div>
<div class="t" style="left:831px;top:602.92px;font-size:7.2px;line-height:10px;color:#707070;">0</div>
<div class="t" style="left:929px;top:602.92px;font-size:7.2px;line-height:10px;color:#707070;">$0.00</div>
<div class="t" style="left:281.2px;top:642.22px;font-size:7.2px;line-height:10px;color:#222;font-weight:bold;letter-spacing:-0.17px;">Total</div>
<div class="t" style="left:468.6px;top:642.22px;font-size:7.2px;line-height:10px;color:#222;font-weight:bold;letter-spacing:0.09px;">$933.38</div>
<div class="t" style="left:529px;top:642.22px;font-size:7.2px;line-height:10px;color:#222;font-weight:bold;transform:translateX(-50%);">0</div>
<div class="t" style="left:591px;top:642.22px;font-size:7.2px;line-height:10px;color:#222;font-weight:bold;transform:translateX(-50%);">51</div>
<div class="t" style="left:660.6px;top:642.22px;font-size:7.2px;line-height:10px;color:#222;font-weight:bold;transform:translateX(-50%);">51</div>
<div class="t" style="left:717.8px;top:642.22px;font-size:7.2px;line-height:10px;color:#222;font-weight:bold;transform:translateX(-50%);">25</div>
<div class="t" style="left:777.7px;top:642.22px;font-size:7.2px;line-height:10px;color:#222;font-weight:bold;transform:translateX(-50%);">10</div>
<div class="t" style="left:929px;top:642.22px;font-size:7.2px;line-height:10px;color:#222;font-weight:bold;letter-spacing:0.07px;">$1,472.45</div>
<div class="t" style="left:1000.8px;top:640.02px;font-size:7.2px;line-height:10px;color:#555;letter-spacing:0px;">57.75%</div>
<div class="t" style="left:1037px;top:642.01px;font-size:4.8px;line-height:7px;color:#8cc9ee;letter-spacing:0.16px;">NORMAL</div>
</body>
</html>
